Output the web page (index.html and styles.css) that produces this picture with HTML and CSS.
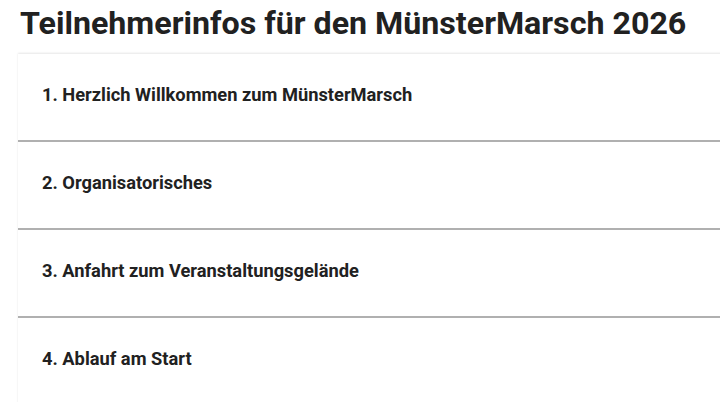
FILE: index.html
```html
<!DOCTYPE html>
<html lang="de">
<head>
<meta charset="utf-8">
<title>Teilnehmerinfos</title>
<link rel="stylesheet" href="styles.css">
</head>
<body>
<main class="page">
  <h1 class="title">Teilnehmerinfos für den MünsterMarsch 2026</h1>
  <section class="accordion">
    <div class="item"><h2 class="item-title">1. Herzlich Willkommen zum MünsterMarsch</h2></div>
    <div class="item"><h2 class="item-title">2. Organisatorisches</h2></div>
    <div class="item"><h2 class="item-title">3. Anfahrt zum Veranstaltungsgelände</h2></div>
    <div class="item"><h2 class="item-title">4. Ablauf am Start</h2></div>
  </section>
</main>
</body>
</html>
```
FILE: styles.css
```css
html, body {
  margin: 0;
  padding: 0;
  background: #ffffff;
  overflow: hidden;
}
body {
  font-family: Roboto, "Liberation Sans", sans-serif;
  color: #212121;
}
.page {
  padding-left: 18px;
}
.title {
  margin: 0;
  padding: 3px 0 0 2px;
  height: 51px;
  font-size: 32.2px;
  line-height: 40px;
  font-weight: 700;
  color: #212121;
  white-space: nowrap;
}
.accordion {
  margin-right: -20px;
  background: #fff;
  box-shadow: 0 -1px 2px rgba(0,0,0,0.1);
}
.item {
  height: 80px;
  padding: 0 0 6px 24px;
  border-bottom: 2px solid #b0b0b0;
  display: flex;
  align-items: center;
}
.item-title {
  margin: 0;
  font-size: 18.3px;
  font-weight: 700;
  color: #212121;
}
```
